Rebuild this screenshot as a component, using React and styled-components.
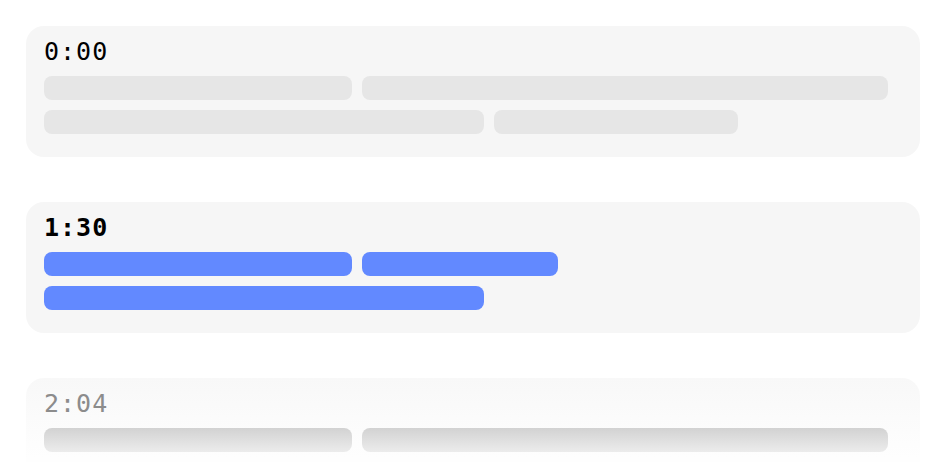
import React from "react";
import styled, {createGlobalStyle, css} from "styled-components";

const GlobalStyle = createGlobalStyle`
	html, body {
		margin: 0;
		padding: 0;
		background: #ffffff;
	}
	body {
		font-family: "DejaVu Sans Mono", "Liberation Mono", monospace;
		overflow: hidden;
	}
`;

const List = styled.div`
	display: flex;
	flex-direction: column;
	gap: 45px;
	padding: 26px 20px 0 26px;
`;

const Card = styled.div`
	display: flex;
	flex-direction: column;
	gap: 10px;
	padding: 14px 18px 23px 18px;
	border-radius: 18px;
	background: #f6f6f6;
	${(p) =>
		p.$fade &&
		css`
			background: linear-gradient(#f8f8f8, #fefefe 80px);
		`}
`;

const Time = styled.div`
	font-size: 25px;
	letter-spacing: 1px;
	line-height: 24px;
	height: 24px;
	margin-bottom: 2px;
	color: ${(p) => (p.$fade ? "#8c8c8c" : "#000000")};
	font-weight: ${(p) => (p.$active ? 700 : 400)};
`;

const Row = styled.div`
	display: flex;
	gap: 10px;
`;

const Bar = styled.div`
	width: ${(p) => p.$w}px;
	height: 24px;
	border-radius: 8px;
	flex: 0 0 auto;
	background: ${(p) => (p.$active ? "#6289ff" : "#e6e6e6")};
	${(p) =>
		p.$fade &&
		css`
			background: linear-gradient(#d2d2d2, #ececec);
		`}
`;

const lines = [
	{time: "0:00", rows: [[308, 526], [440, 244]]},
	{time: "1:30", active: true, rows: [[308, 196], [440]]},
	{time: "2:04", fade: true, rows: [[308, 526], [440, 244]]},
];

const App = () => {
	return (
		<>
			<GlobalStyle />
			<List>
				{lines.map((line) => (
					<Card key={line.time} $fade={line.fade}>
						<Time $active={line.active} $fade={line.fade}>
							{line.time}
						</Time>
						{line.rows.map((row, i) => (
							<Row key={i}>
								{row.map((w, j) => (
									<Bar key={j} $w={w} $active={line.active} $fade={line.fade} />
								))}
							</Row>
						))}
					</Card>
				))}
			</List>
		</>
	);
};

export default App;
